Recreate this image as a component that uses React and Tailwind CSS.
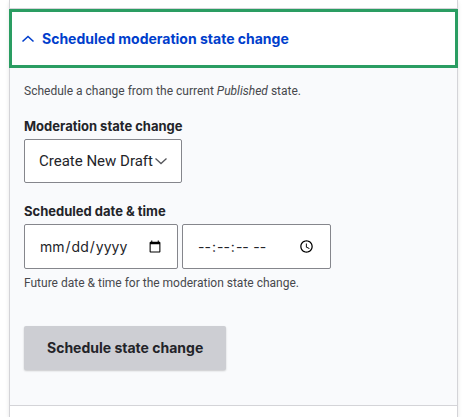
import React, { useState } from "react";

const fieldClass = "rounded-xs border border-[#85868c] bg-white pl-[14px] text-[#232429]";
const dateClass = "h-[45px] pr-[13px] text-[14px]";
const labelClass = "block text-[13px] leading-[18px] font-bold text-[#232429]";
const helpClass = "font-[Roboto,sans-serif] text-[12px] leading-[18px] text-[#47484d]";

const Chevron = function ({ className }) {
    return (
        <svg className={className} viewBox="0 0 14 8" fill="none" stroke="currentColor" aria-hidden="true">
            <path d="M1.5 1.5 7 6.5l5.5-5" />
        </svg>
    );
};

const App = function () {
    const [isOpen, setIsOpen] = useState(true);
    const [state, setState] = useState("draft");

    return (
        <div className="min-h-screen flex flex-col bg-white pl-[9px] pr-[7px] font-['Inter',sans-serif]">
            <div className="flex-1 flex flex-col border-x border-[#d4d4d8] shadow-[0_2px_4px_rgba(0,0,0,0.1)]">
                <div className="h-[9px] border-b border-[#d4d4d8]" />
                <section className="border-b border-[#d4d4d8] bg-[#f9fafc]">
                    <h2 className="-mx-px">
                        <button
                            type="button"
                            aria-expanded={isOpen}
                            onClick={() => setIsOpen(!isOpen)}
                            className="flex w-full h-[59px] items-center gap-[7px] border-3 border-[#2a9d62] bg-white px-[9px] text-left text-[14px] font-bold text-[#003ecc]"
                        >
                            <Chevron className={isOpen ? "w-[14px] h-2 stroke-[1.6] rotate-180" : "w-[14px] h-2 stroke-[1.6]"} />
                            Scheduled moderation state change
                        </button>
                    </h2>
                    {isOpen && (
                        <form className="px-[14px] pt-[14px] pb-[35px]" onSubmit={(e) => e.preventDefault()}>
                            <p className={helpClass}>
                                Schedule a change from the current <em>Published</em> state.
                            </p>
                            <div className="mt-[17px]">
                                <label htmlFor="state" className={labelClass}>Moderation state change</label>
                                <div className="relative mt-[4px] w-[158px]">
                                    <select
                                        id="state"
                                        value={state}
                                        onChange={(e) => setState(e.target.value)}
                                        className={`${fieldClass} h-[44px] w-full appearance-none font-[Roboto,sans-serif] text-[15px]`}
                                    >
                                        <option value="draft">Create New Draft</option>
                                        <option value="archived">Archive</option>
                                    </select>
                                    <Chevron className="pointer-events-none absolute right-[14px] top-[18px] w-[14px] h-2 stroke-[1.3] text-[#55565b]" />
                                </div>
                            </div>
                            <fieldset className="mt-[19px]">
                                <legend className={labelClass}>Scheduled date &amp; time</legend>
                                <div className="mt-[4px] flex flex-wrap gap-[4px]">
                                    <input type="date" aria-label="Date" className={`${fieldClass} ${dateClass} w-[154px]`} />
                                    <input type="time" step="1" aria-label="Time" className={`${fieldClass} ${dateClass} w-[149px]`} />
                                </div>
                                <p className={`${helpClass} mt-[5px]`}>Future date &amp; time for the moderation state change.</p>
                            </fieldset>
                            <button
                                type="submit"
                                className="mt-[34px] h-[44px] rounded-xs bg-[#cdced3] px-[23px] pb-[2px] text-[14px] font-bold text-[#232429] shadow-[0_1px_2px_rgba(0,0,0,0.2)]"
                            >
                                Schedule state change
                            </button>
                        </form>
                    )}
                </section>
            </div>
        </div>
    );
};

export default App;
